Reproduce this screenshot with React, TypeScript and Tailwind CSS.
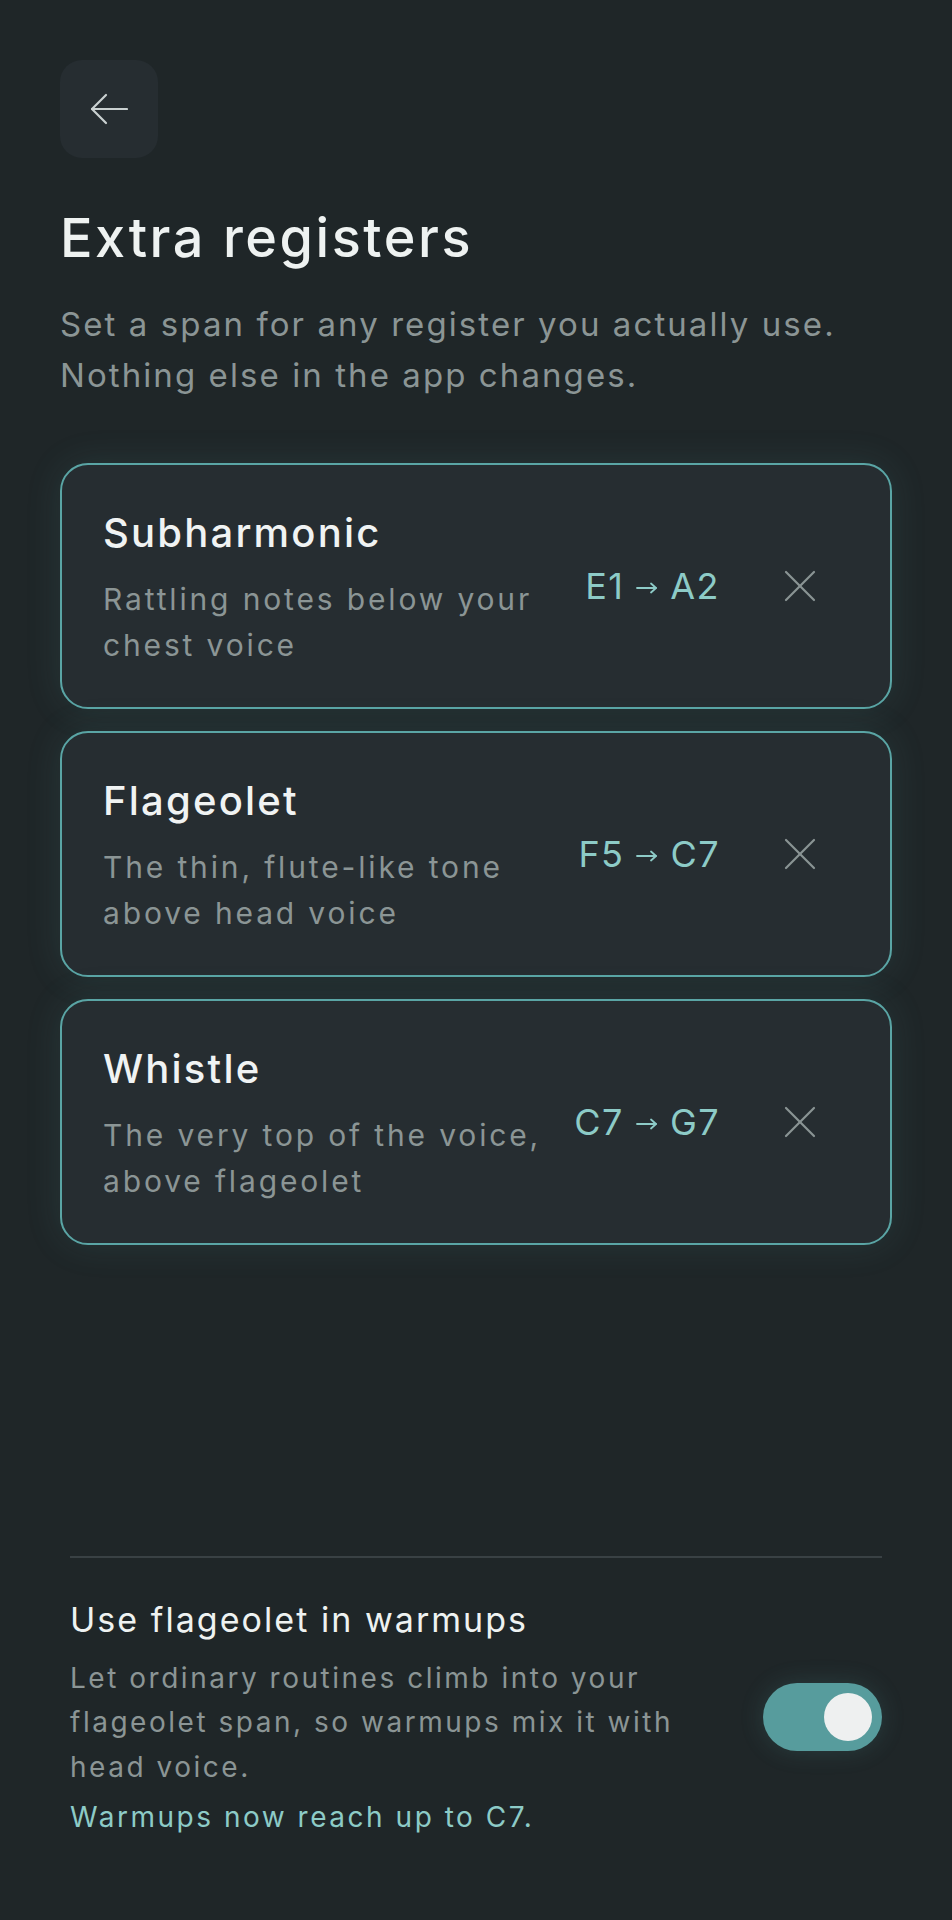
import React from "react";

const registers = [
  { name: "Subharmonic", desc: "Rattling notes below your chest voice", low: "E1", high: "A2" },
  { name: "Flageolet", desc: "The thin, flute-like tone above head voice", low: "F5", high: "C7" },
  { name: "Whistle", desc: "The very top of the voice, above flageolet", low: "C7", high: "G7" },
];

const BackArrow = () => (
  <svg width="38" height="32" viewBox="0 0 38 32" fill="none" stroke="#c9d0d0" strokeWidth="2.2" strokeLinecap="round" strokeLinejoin="round">
    <path d="M37 16H2" />
    <path d="M16 2L2 16l14 14" />
  </svg>
);

const CloseIcon = () => (
  <svg width="32" height="32" viewBox="0 0 32 32" fill="none" stroke="#8a9494" strokeWidth="2.2" strokeLinecap="round">
    <path d="M2 2l28 28" />
    <path d="M30 2L2 30" />
  </svg>
);

const RegisterCard: React.FC<{ name: string; desc: string; low: string; high: string }> = ({ name, desc, low, high }) => (
  <div className="h-[246px] flex items-center rounded-[28px] border-2 border-[#5aa5a5] bg-[#262d31] pl-[41px] pr-[74px] shadow-[0_0_36px_rgba(94,170,170,0.13)]">
    <div className="w-[460px] pt-[6px]">
      <div className="text-[40px] leading-[46px] font-medium tracking-[0.055em] text-[#f0f3f3]">{name}</div>
      <div className="mt-[20px] text-[30px] leading-[46px] tracking-[0.095em] text-[#8b9595]">{desc}</div>
    </div>
    <div className="flex-1 flex items-center justify-end gap-[12px] text-[36px] tracking-[0.04em] text-[#8dcbc7] whitespace-nowrap">
      <span>{low}</span>
      <svg width="22" height="12" viewBox="0 0 22 12" fill="none" stroke="#8dcbc7" strokeWidth="1.8" strokeLinecap="round" strokeLinejoin="round" className="mt-[4px]">
        <path d="M1 6h19" />
        <path d="M15 1.5L20 6l-5 4.5" />
      </svg>
      <span>{high}</span>
    </div>
    <button className="ml-[64px] flex items-center justify-center" aria-label={`Remove ${name}`}>
      <CloseIcon />
    </button>
  </div>
);

export default function App() {
  const [on, setOn] = React.useState(true);
  return (
    <div className="min-h-screen flex flex-col bg-[#1f2628] px-[60px] pt-[60px] pb-[83px]" style={{ fontFamily: "Inter, 'Noto Sans', sans-serif" }}>
      <button className="w-[98px] h-[98px] rounded-[22px] bg-[#262d31] flex items-center justify-center" aria-label="Back">
        <BackArrow />
      </button>

      <h1 className="mt-[47px] text-[54px] leading-[65px] font-medium tracking-[0.047em] text-[#eef2f1]">Extra registers</h1>
      <p className="mt-[29px] text-[33px] leading-[51px] tracking-[0.063em] text-[#8b9595]">
        Set a span for any register you actually use.
        <br />
        Nothing else in the app changes.
      </p>

      <div className="mt-[62px] flex flex-col gap-[22px]">
        {registers.map((r) => (
          <RegisterCard key={r.name} {...r} />
        ))}
      </div>

      <div className="mt-auto mx-[10px]">
        <div className="h-[2px] bg-[#394144]" />
        <div className="mt-[40px] flex items-center gap-[68px]">
          <div className="flex-1">
            <div className="text-[34px] leading-[44px] tracking-[0.06em] text-[#eef2f1]">Use flageolet in warmups</div>
            <div className="mt-[14px] text-[28px] leading-[44.5px] tracking-[0.09em] text-[#8b9595]">
              Let ordinary routines climb into your flageolet span, so warmups mix it with head voice.
            </div>
            <div className="mt-[8px] text-[28px] leading-[40px] tracking-[0.09em] text-[#8dcbc7]">Warmups now reach up to C7.</div>
          </div>
          <button
            onClick={() => setOn(!on)}
            className="w-[119px] h-[68px] shrink-0 rounded-full bg-[#579c9d] flex items-center justify-end px-[10px] shadow-[0_0_24px_rgba(87,156,157,0.2)]"
            aria-label="Use flageolet in warmups"
          >
            <span className="w-[48px] h-[48px] rounded-full bg-[#eef0f0]" />
          </button>
        </div>
      </div>
    </div>
  );
}
